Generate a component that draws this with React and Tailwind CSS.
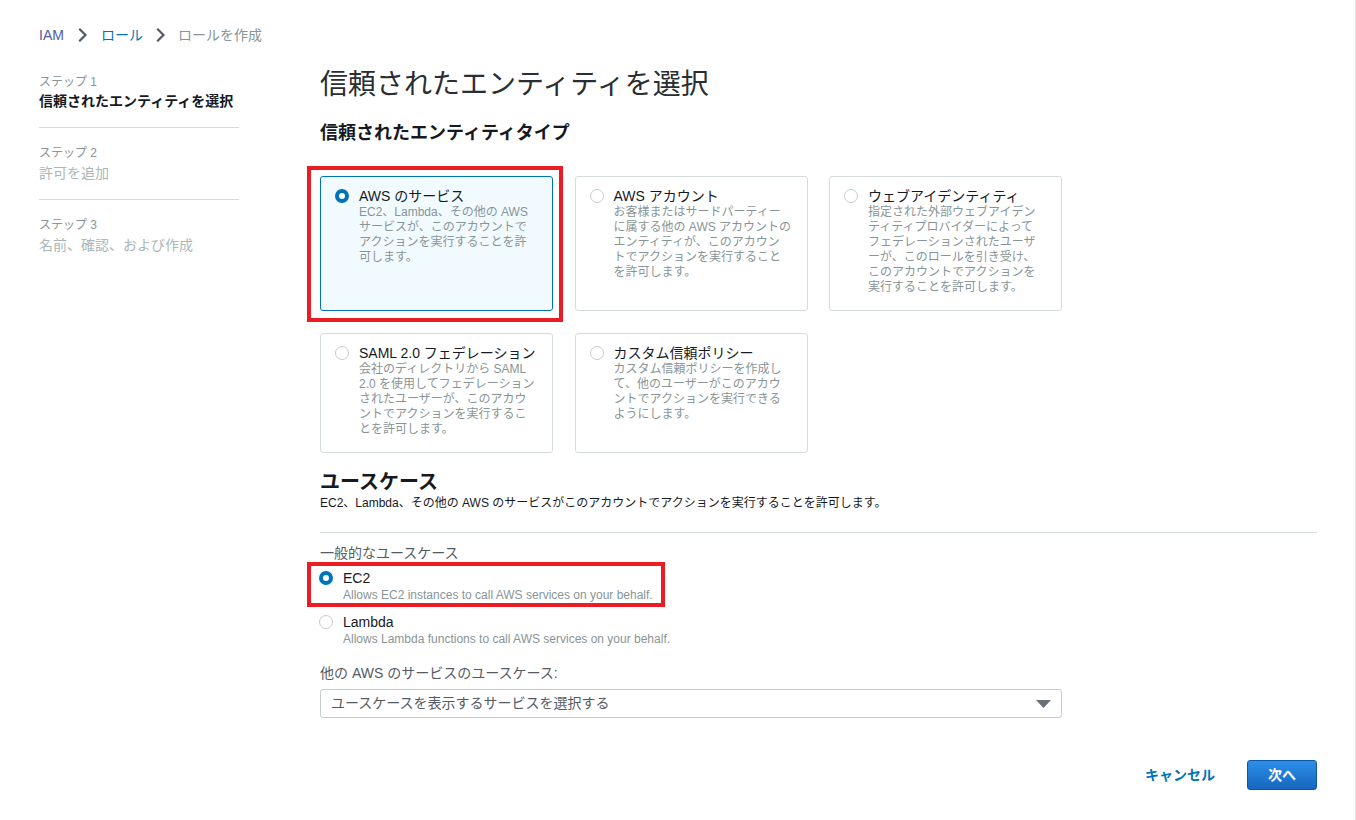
import React from "react";

const FONT = { fontFamily: '"Liberation Sans", "Noto Sans CJK JP", Arial, sans-serif' };

function Chevron() {
  return (
    <svg width="9" height="14" viewBox="0 0 9 14" className="shrink-0">
      <path d="M2 1.5 L7.5 7 L2 12.5" fill="none" stroke="#545b64" strokeWidth="2.2" strokeLinecap="square" />
    </svg>
  );
}

function Radio({ checked }) {
  return checked ? (
    <span className="block w-[14px] h-[14px] rounded-full border-[4px] border-[#0073bb] bg-white shrink-0" />
  ) : (
    <span className="block w-[14px] h-[14px] rounded-full border border-[#c6cccc] bg-white shrink-0" />
  );
}

function Card({ title, lines, selected }) {
  return (
    <div
      className={
        "h-full rounded-[3px] border pt-[10px] pb-[15px] pl-[14px] pr-[10px] flex items-start gap-[10px] " +
        (selected ? "border-[#0073bb] bg-[#f1faff]" : "border-[#d5dbdb] bg-white")
      }
    >
      <div className="h-[18px] flex items-center">
        <Radio checked={selected} />
      </div>
      <div>
        <div className="text-[14px] leading-[18px] text-[#16191f] whitespace-nowrap">{title}</div>
        <div className="text-[12px] leading-[15px] text-[#879596]">
          {lines.map((l, i) => (
            <span key={i} className="block whitespace-nowrap">
              {l}
            </span>
          ))}
        </div>
      </div>
    </div>
  );
}

function NavItem({ step, title, active, first }) {
  return (
    <div className={"border-b border-[#d5dbdb] pb-[16px] " + (first ? "" : "pt-[17px]")}>
      <div className="text-[12px] leading-[16px] text-[#879596]">{step}</div>
      <div
        className={
          "text-[14px] leading-[20px] " +
          (first ? "mt-[1px] " : "mt-[2px] ") +
          (active ? "font-bold text-[#16191f]" : "text-[#aab7b8]")
        }
      >
        {title}
      </div>
    </div>
  );
}

function UseCase({ title, desc, checked }) {
  return (
    <div className="flex items-start gap-[10px]">
      <div className="h-[18px] flex items-center">
        <Radio checked={checked} />
      </div>
      <div>
        <div className="text-[14px] leading-[18px] text-[#16191f]">{title}</div>
        <div className="text-[12px] leading-[16px] text-[#879596] whitespace-nowrap">{desc}</div>
      </div>
    </div>
  );
}

export default function App() {
  return (
    <div style={FONT} className="w-full min-h-[820px] bg-white border-r border-[#e5e7e7] pl-[39px] pr-[38px] pt-[25px]">
      {/* breadcrumb */}
      <div className="flex items-center h-[20px] text-[14px] leading-[20px]">
        <span className="text-[#4d5ba8]">IAM</span>
        <span className="ml-[14px] mr-[14px] flex items-center">
          <Chevron />
        </span>
        <span className="text-[#0073bb]">ロール</span>
        <span className="ml-[13px] mr-[13px] flex items-center">
          <Chevron />
        </span>
        <span className="text-[#879596]">ロールを作成</span>
      </div>

      <div className="flex mt-[20px]">
        {/* left nav */}
        <aside className="w-[200px] shrink-0 pt-[9px]">
          <NavItem first step="ステップ 1" title="信頼されたエンティティを選択" active />
          <NavItem step="ステップ 2" title="許可を追加" />
          <div className="pt-[17px]">
            <div className="text-[12px] leading-[16px] text-[#879596]">ステップ 3</div>
            <div className="mt-[2px] text-[14px] leading-[20px] text-[#aab7b8]">名前、確認、および作成</div>
          </div>
        </aside>

        {/* main */}
        <main className="ml-[81px] flex-1">
          <h1 className="mt-[2px] text-[28px] leading-[36px] font-normal text-[#2a2e33]">信頼されたエンティティを選択</h1>
          <h2 className="mt-[18px] text-[18px] leading-[24px] font-bold text-[#16191f]">信頼されたエンティティタイプ</h2>

          <div className="mt-[31px] grid grid-cols-[233px_233px_233px] gap-x-[21.5px] gap-y-[22px]">
            <div className="relative">
              <Card
                selected
                title="AWS のサービス"
                lines={["EC2、Lambda、その他の AWS", "サービスが、このアカウントで", "アクションを実行することを許", "可します。"]}
              />
              <div className="absolute -left-[13px] -right-[10px] -top-[10px] -bottom-[11px] border-[4px] border-[#ec1c24] pointer-events-none" />
            </div>
            <Card
              title="AWS アカウント"
              lines={["お客様またはサードパーティー", "に属する他の AWS アカウントの", "エンティティが、このアカウン", "トでアクションを実行すること", "を許可します。"]}
            />
            <Card
              title="ウェブアイデンティティ"
              lines={["指定された外部ウェブアイデン", "ティティプロバイダーによって", "フェデレーションされたユーザ", "ーが、このロールを引き受け、", "このアカウントでアクションを", "実行することを許可します。"]}
            />
            <Card
              title="SAML 2.0 フェデレーション"
              lines={["会社のディレクトリから SAML", "2.0 を使用してフェデレーション", "されたユーザーが、このアカウ", "ントでアクションを実行するこ", "とを許可します。"]}
            />
            <Card
              title="カスタム信頼ポリシー"
              lines={["カスタム信頼ポリシーを作成し", "て、他のユーザーがこのアカウ", "ントでアクションを実行できる", "ようにします。"]}
            />
          </div>

          <h2 className="mt-[16px] text-[20px] leading-[26px] font-bold text-[#16191f]">ユースケース</h2>
          <p className="text-[12px] leading-[16px] text-[#16191f]">
            EC2、Lambda、その他の AWS のサービスがこのアカウントでアクションを実行することを許可します。
          </p>

          <div className="mt-[21px] border-t border-[#d5dbdb]" />

          <div className="mt-[10px] text-[14px] leading-[20px] text-[#545b64]">一般的なユースケース</div>

          <div className="mt-[6px] ml-[-1px] flex flex-col gap-[10px]">
            <div className="relative">
              <UseCase checked title="EC2" desc="Allows EC2 instances to call AWS services on your behalf." />
              <div className="absolute -left-[12px] w-[358px] -top-[7px] -bottom-[4px] border-[4px] border-[#ec1c24] pointer-events-none" />
            </div>
            <UseCase title="Lambda" desc="Allows Lambda functions to call AWS services on your behalf." />
          </div>

          <div className="mt-[16px] text-[14px] leading-[20px] text-[#545b64]">他の AWS のサービスのユースケース:</div>

          <div className="mt-[6px] w-[742px] h-[29px] rounded-[3px] border border-[#c6cccc] bg-white flex items-center justify-between pl-[10px] pr-[10px]">
            <span className="text-[14px] text-[#545b64]">ユースケースを表示するサービスを選択する</span>
            <svg width="15" height="8" viewBox="0 0 15 8">
              <path d="M0 0 H15 L7.5 8 Z" fill="#687078" />
            </svg>
          </div>

          <div className="mt-[42px] flex items-center justify-end">
            <button className="text-[14px] font-bold text-[#0073bb] mr-[32px]">キャンセル</button>
            <button className="w-[70px] h-[30px] rounded-[3px] border border-[#1057a3] bg-gradient-to-b from-[#2d8fe8] to-[#1766bf] text-white text-[14px] font-bold">
              次へ
            </button>
          </div>
        </main>
      </div>
    </div>
  );
}
